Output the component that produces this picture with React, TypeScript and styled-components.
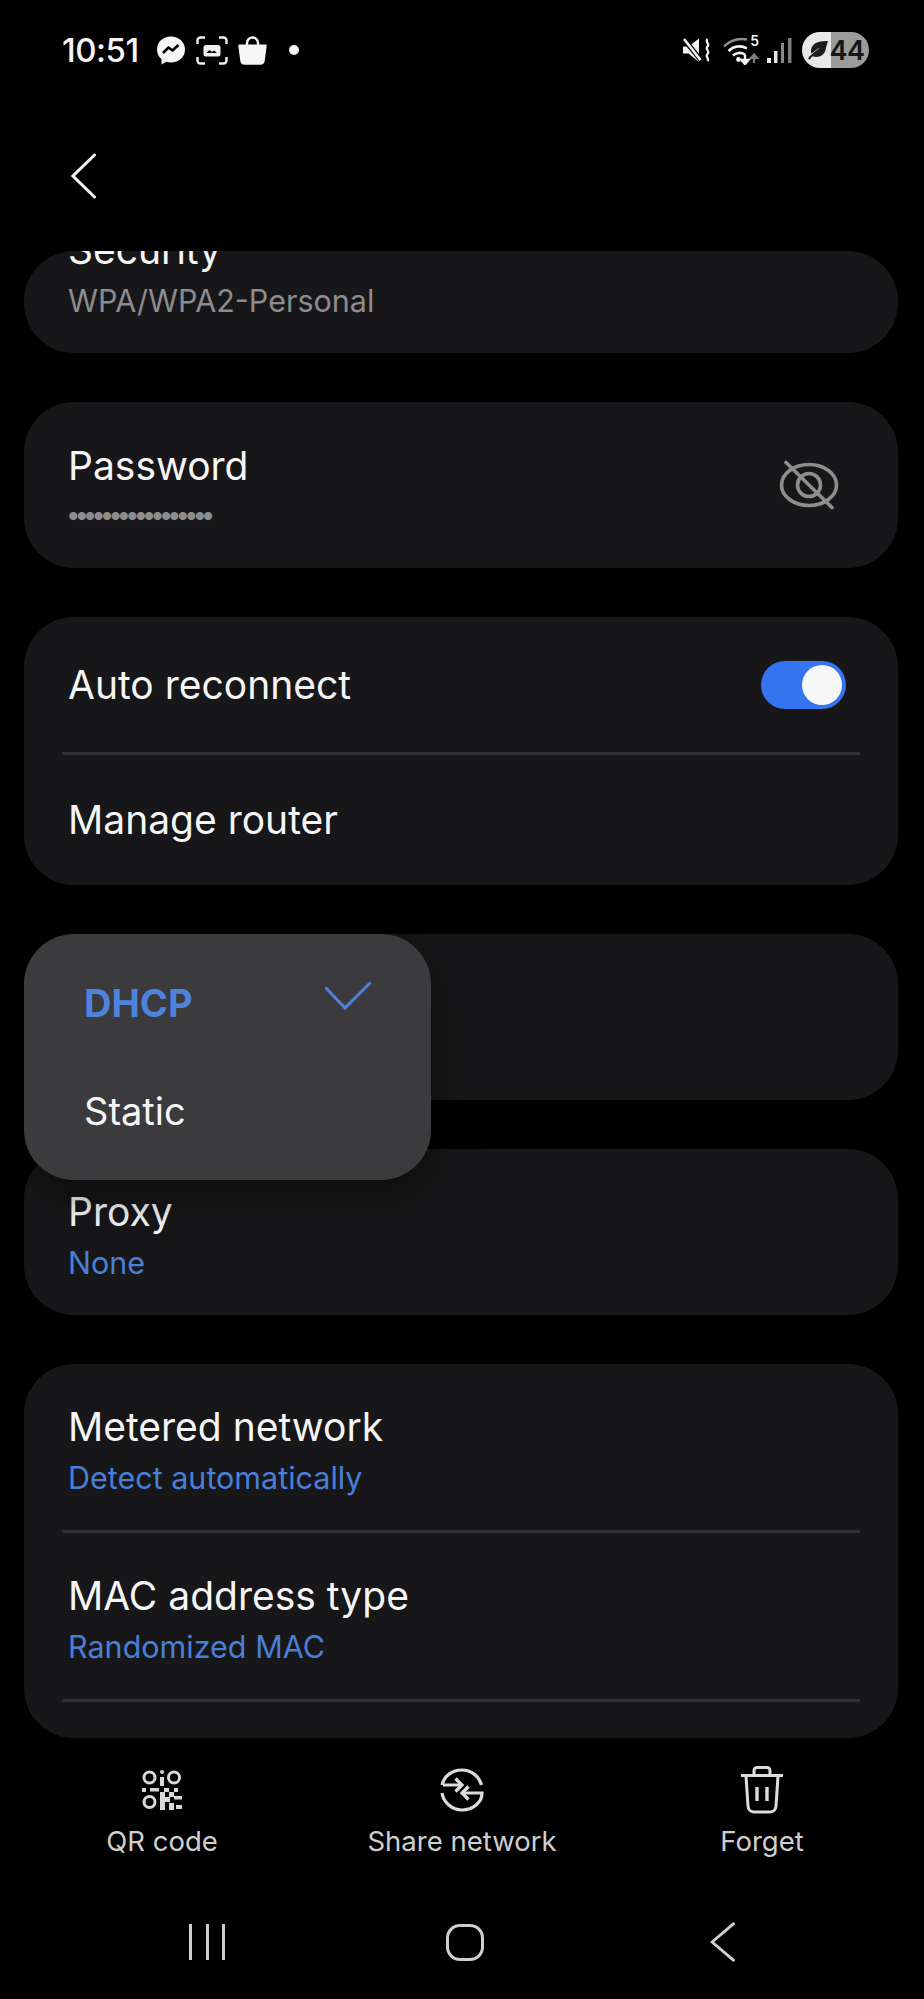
import React from "react"
import styled, { createGlobalStyle } from "styled-components"

const GlobalStyle = createGlobalStyle`
  html, body {
    margin: 0;
    padding: 0;
    background: #000;
  }

  body {
    font-family: Inter, "Noto Sans", sans-serif;
  }
`

// Status bar icons
const MessengerIcon = () => (
  <svg width="30" height="29" viewBox="0 0 30 29">
    <path
      d="M15 0.500C7 0.500 1 6 1 13.500c0 4 1.700 7.300 4.500 9.600V28.500l5-2.700c1.400 0.400 2.900 0.600 4.500 0.600 8 0 14-5.500 14-12.900S23 0.500 15 0.500z"
      fill="#f6f6f6"
    />
    <path d="M7 17l5.500-5.500 4 3 6-5.500" fill="none" stroke="#000" strokeWidth="2.600" strokeLinejoin="round" />
  </svg>
)

const CaptureIcon = () => (
  <svg width="32" height="29" viewBox="0 0 32 29" fill="none">
    <path
      d="M1.500 8V4.500a3 3 0 0 1 3-3H9M23 1.500h4.500a3 3 0 0 1 3 3V8M30.500 21v3.500a3 3 0 0 1-3 3H23M9 27.500H4.500a3 3 0 0 1-3-3V21"
      stroke="#f0f0f0"
      strokeWidth="2.400"
    />
    <rect x="7.500" y="9" width="17" height="11.500" rx="2.500" fill="#f0f0f0" />
    <path d="M10.500 17l3-3 2.500 2 2-1.500 3 2.500z" fill="#000" />
  </svg>
)

const BagIcon = () => (
  <svg width="29" height="29" viewBox="0 0 29 29">
    <path d="M9 10V7a5.500 5.500 0 0 1 11 0v3" fill="none" stroke="#f6f6f6" strokeWidth="2.400" />
    <path d="M1.500 8.500h26c0.800 0 1.300 0.600 1.200 1.400l-2 15.100c-0.300 2.300-2 3.700-4.200 3.700H6.500c-2.200 0-3.900-1.400-4.200-3.700L0.300 9.900c-0.100-0.800 0.400-1.400 1.200-1.400z" fill="#f6f6f6" />
  </svg>
)

const MuteIcon = () => (
  <svg width="28" height="25" viewBox="0 0 28 25" fill="none">
    <path d="M0 8.500h5.500L16 0.500V24L5.500 15.500H0z" fill="#f4f4f4" />
    <path d="M0.500 0.500L18.500 23" stroke="#000" strokeWidth="5" />
    <path d="M1 1l16.500 21" stroke="#f4f4f4" strokeWidth="2.600" />
    <path d="M24.500 1c-3 3 3 4.500 0 7.500s3 4.500 0 7.500 2.500 4 0 7" stroke="#f4f4f4" strokeWidth="2.200" />
  </svg>
)

const WifiIcon = () => (
  <svg width="40" height="30" viewBox="0 0 40 30" fill="none">
    <path d="M1 11.500C7 5.500 15 3 24 4.500" stroke="#8f8f8f" strokeWidth="2.400" />
    <path d="M5.500 16C10.500 11 18 10 24 13.500" stroke="#f4f4f4" strokeWidth="2.600" />
    <path d="M10 20.500c3-3 8-3.500 12-1" stroke="#f4f4f4" strokeWidth="2.600" />
    <circle cx="15.500" cy="24.500" r="2.400" fill="#f4f4f4" />
    <path d="M22 19.500v8M18.500 25l3.500 4 3.500-4z" stroke="#f4f4f4" strokeWidth="2.400" fill="#f4f4f4" />
    <path d="M31 28V20M28 23l3-3.500 3 3.500z" stroke="#7c7c7c" strokeWidth="2.200" fill="#7c7c7c" />
  </svg>
)

const SignalIcon = () => (
  <svg width="26" height="26" viewBox="0 0 26 26">
    <rect x="0" y="21" width="4" height="5" fill="#f4f4f4" />
    <rect x="7" y="14" width="3.500" height="12" fill="#e6e6e6" />
    <rect x="14" y="6" width="3" height="20" fill="#8a8a8a" />
    <rect x="21" y="1" width="3.500" height="25" fill="#7c7c7c" />
  </svg>
)

const LeafIcon = () => (
  <svg width="22" height="20" viewBox="0 0 22 20">
    <path d="M21 1C12 0.500 5 3 4 10c-0.200 1.500 0 2.500 0.500 3.500C7 12 10 9 13 7.500 10 10 6.500 13 4 15c-1 0.800-2.200 2-3 4l2 0.500c0.800-1.500 1.600-2.500 2.500-3.200 5.500 1.700 11.500-0.300 13-6.300C19 7 20 4 21 1z" fill="#1c1c1c" />
  </svg>
)

// Row and toolbar icons
const EyeOffIcon = () => (
  <svg width="60" height="52" viewBox="0 0 60 52" fill="none" stroke="#8e8e8e" strokeWidth="3.600">
    <ellipse cx="30" cy="26" rx="27.500" ry="20.500" />
    <circle cx="30" cy="26" r="11.500" />
    <path d="M7 3.500L53 48.500" strokeLinecap="round" />
  </svg>
)

const CheckIcon = () => (
  <svg width="48" height="29" viewBox="0 0 48 29" fill="none">
    <path d="M1.500 6.500L21 27 46.500 1.500" stroke="#4f82dc" strokeWidth="3" />
  </svg>
)

const QrIcon = () => (
  <svg width="40" height="40" viewBox="0 0 40 40" fill="#d8d8d8">
    <g fill="none" stroke="#d8d8d8" strokeWidth="3">
      <circle cx="7.500" cy="7.500" r="5.500" />
      <circle cx="32" cy="7.500" r="5.500" />
      <circle cx="7.500" cy="32" r="5.500" />
    </g>
    <rect x="18" y="0" width="4" height="4" rx="2" />
    <rect x="18" y="7" width="4" height="9" />
    <rect x="0" y="18" width="4" height="4" />
    <rect x="8" y="18" width="9" height="3.500" />
    <rect x="22" y="18" width="5" height="4" />
    <rect x="32" y="18" width="4" height="4" />
    <rect x="18" y="22" width="5" height="18" />
    <rect x="27" y="22" width="5" height="5" />
    <rect x="23" y="27" width="5" height="5" />
    <rect x="32" y="26" width="8" height="3.500" />
    <rect x="27" y="33" width="5" height="7" />
    <rect x="34" y="35" width="6" height="4" />
  </svg>
)

const ShareIcon = () => (
  <svg width="44" height="44" viewBox="0 0 44 44" fill="none" stroke="#dcdcdc" strokeWidth="3.200">
    <path d="M2 17C4 8 12 2 22 2c9 0 17 6 19.500 15" />
    <path d="M2 25c1.500 9.500 10 17 20 17 11 0 20-7.500 20-17H22" />
    <path d="M3 17h19M15.500 10.500l6.500 6.500-6.500 6.500" />
    <path d="M28.500 18.500L22 25l6.500 6.500" />
  </svg>
)

const TrashIcon = () => (
  <svg width="44" height="48" viewBox="0 0 44 48" fill="none" stroke="#dcdcdc" strokeWidth="3">
    <path d="M1 9.500h42" />
    <path d="M14 9V4.500a3 3 0 0 1 3-3h10a3 3 0 0 1 3 3V9" />
    <path d="M6 10l2 30c0.200 3.500 2.500 6 6 6h16c3.500 0 5.800-2.500 6-6l2-30" />
    <path d="M17 21v14M27 21v14" strokeWidth="3.400" />
  </svg>
)

const ChevronLeft = ({ size }: { size: "large" | "small" }) => (
  <svg width="26" height={size === "large" ? 46 : 40} viewBox="0 0 26 46" preserveAspectRatio="none" fill="none">
    <path d="M23.500 2L2 23l21.500 21" stroke={size === "large" ? "#f2f2f2" : "#cfcfcf"} strokeWidth="3" strokeLinecap="round" />
  </svg>
)

const App: React.FC = () => (
  <Page>
    <GlobalStyle />

    <StatusBar>
      <StatusGroup>
        <Clock>10:51</Clock>
        <NotificationIcons>
          <MessengerIcon />
          <CaptureIcon />
          <BagIcon />
        </NotificationIcons>
        <MoreDot />
      </StatusGroup>

      <SystemIcons>
        <MuteIcon />
        <WifiSlot>
          <WifiIcon />
          <WifiBand>5</WifiBand>
        </WifiSlot>
        <SignalIcon />
        <Battery>
          <LeafIcon />
          44
        </Battery>
      </SystemIcons>
    </StatusBar>

    <Header>
      <ChevronLeft size="large" />
    </Header>

    <ScrollArea>
      <ScrollContent>
        <Card>
          <TwoLineRow>
            <Title>Security</Title>
            <GreySub>WPA/WPA2-Personal</GreySub>
          </TwoLineRow>
        </Card>

        <Card>
          <TwoLineRow>
            <SplitRow>
              <div>
                <Title>Password</Title>
                <Dots>•••••••••••••••••</Dots>
              </div>
              <EyeSlot>
                <EyeOffIcon />
              </EyeSlot>
            </SplitRow>
          </TwoLineRow>
        </Card>

        <Card>
          <SingleRow>
            <Title>Auto reconnect</Title>
            <Toggle>
              <ToggleThumb />
            </Toggle>
          </SingleRow>
          <Divider />
          <SingleRow $short>
            <Title>Manage router</Title>
          </SingleRow>
        </Card>

        <Card>
          <TwoLineRow>
            <Title>IP settings</Title>
            <BlueSub>DHCP</BlueSub>
          </TwoLineRow>
          <Menu>
            <MenuItem $active>
              DHCP
              <MenuCheck>
                <CheckIcon />
              </MenuCheck>
            </MenuItem>
            <MenuItem>Static</MenuItem>
          </Menu>
        </Card>

        <Card>
          <TwoLineRow>
            <Title>Proxy</Title>
            <BlueSub>None</BlueSub>
          </TwoLineRow>
        </Card>

        <Card>
          <TwoLineRow>
            <Title>Metered network</Title>
            <BlueSub>Detect automatically</BlueSub>
          </TwoLineRow>
          <Divider />
          <TwoLineRow>
            <Title>MAC address type</Title>
            <BlueSub>Randomized MAC</BlueSub>
          </TwoLineRow>
          <Divider />
          <TwoLineRow />
        </Card>
      </ScrollContent>
    </ScrollArea>

    <Actions>
      <Action>
        <ActionIcon>
          <QrIcon />
        </ActionIcon>
        <ActionLabel>QR code</ActionLabel>
      </Action>
      <Action>
        <ActionIcon>
          <ShareIcon />
        </ActionIcon>
        <ActionLabel>Share network</ActionLabel>
      </Action>
      <Action>
        <ActionIcon>
          <TrashIcon />
        </ActionIcon>
        <ActionLabel>Forget</ActionLabel>
      </Action>
    </Actions>

    <NavBar>
      <NavSlot>
        <RecentsIcon>
          <RecentsBar />
          <RecentsBar />
          <RecentsBar />
        </RecentsIcon>
      </NavSlot>
      <NavSlot>
        <HomeIcon />
      </NavSlot>
      <NavSlot>
        <ChevronLeft size="small" />
      </NavSlot>
    </NavBar>
  </Page>
)

const Page = styled.div`
  display: flex;
  flex-direction: column;
  width: 924px;
  height: 1999px;
  overflow: hidden;
  background: #000;
  color: #f5f5f5;
`

const StatusBar = styled.div`
  display: flex;
  justify-content: space-between;
  align-items: center;
  flex: 0 0 100px;
  padding: 0 55px 0 62px;
  box-sizing: border-box;
`

const StatusGroup = styled.div`
  display: flex;
  align-items: center;
  gap: 12px;
`

const SystemIcons = styled.div`
  display: flex;
  align-items: center;
  gap: 9px;
`

const Clock = styled.span`
  font-size: 33px;
  font-weight: 500;
  letter-spacing: -0.5px;
  margin-right: 5px;
`

const NotificationIcons = styled.div`
  display: flex;
  align-items: center;
  gap: 10px;
`

const MoreDot = styled.span`
  width: 10px;
  height: 10px;
  margin-left: 10px;
  border-radius: 50%;
  background: #f5f5f5;
`

const WifiSlot = styled.div`
  position: relative;
  display: flex;
  margin: 0 -5px 0 3px;
`

const WifiBand = styled.span`
  position: absolute;
  top: -3px;
  right: 4px;
  font-size: 14px;
  font-weight: 600;
  color: #f4f4f4;
`

const Battery = styled.div`
  display: flex;
  align-items: center;
  justify-content: center;
  gap: 1px;
  width: 67px;
  height: 36px;
  border-radius: 18px;
  background: linear-gradient(90deg, #e8e8e8 0 43%, #9b9b9b 43% 100%);
  color: #161616;
  font-size: 27px;
  font-weight: 600;
  letter-spacing: -0.5px;
`

const Header = styled.div`
  display: flex;
  align-items: center;
  flex: 0 0 151px;
  padding-left: 71px;
  box-sizing: border-box;
`

const ScrollArea = styled.div`
  flex: 0 0 1487px;
  margin: 0 26px 0 24px;
  overflow: hidden;
  border-radius: 50px;
`

const ScrollContent = styled.div`
  display: flex;
  flex-direction: column;
  gap: 49px;
  margin-top: -64px;
`

const Card = styled.div`
  position: relative;
  border-radius: 50px;
  background: #171719;
`

const TwoLineRow = styled.div`
  display: flex;
  flex-direction: column;
  justify-content: center;
  height: 166px;
  padding: 6px 44px 0;
  box-sizing: border-box;
`

const SplitRow = styled.div`
  display: flex;
  justify-content: space-between;
  align-items: center;
  padding-right: 15px;
`

const EyeSlot = styled.span`
  display: flex;
  margin-bottom: 6px;
`

const SingleRow = styled.div<{ $short?: boolean }>`
  display: flex;
  justify-content: space-between;
  align-items: center;
  height: ${({ $short }) => ($short ? 130 : 135)}px;
  padding: 0 52px 0 44px;
  box-sizing: border-box;
`

const Title = styled.div`
  font-size: 39px;
  line-height: 46px;
  color: #f5f5f5;
`

const GreySub = styled.div`
  margin-top: 9px;
  font-size: 30.500px;
  line-height: 38px;
  color: #8c8c8c;
`

const BlueSub = styled(GreySub)`
  color: #4a7fd8;
`

const Dots = styled(GreySub)`
  margin: 7px 0 0 -2px;
  font-size: 26px;
  letter-spacing: -6.200px;
`

const Toggle = styled.div`
  display: flex;
  align-items: center;
  justify-content: flex-end;
  width: 85px;
  height: 48px;
  padding: 0 4px;
  box-sizing: border-box;
  border-radius: 24px;
  background: #3474ee;
`

const ToggleThumb = styled.div`
  width: 40px;
  height: 40px;
  border-radius: 50%;
  background: #f7f7f7;
`

const Divider = styled.div`
  height: 3px;
  margin: 0 38px;
  background: #2f2f31;
`

const Menu = styled.div`
  position: absolute;
  z-index: 2;
  top: 0;
  left: 0;
  display: flex;
  flex-direction: column;
  justify-content: center;
  width: 407px;
  height: 246px;
  padding: 0 59px 0 60px;
  box-sizing: border-box;
  border-radius: 50px;
  background: #3b3b3d;
  box-shadow: 0 12px 44px rgba(0, 0, 0, 0.55);
`

const MenuItem = styled.div<{ $active?: boolean }>`
  display: flex;
  justify-content: space-between;
  align-items: flex-start;
  height: 108px;
  line-height: 108px;
  font-size: 38px;
  font-weight: ${({ $active }) => ($active ? 700 : 400)};
  color: ${({ $active }) => ($active ? "#4f82dc" : "#f5f5f5")};
`

const MenuCheck = styled.span`
  display: flex;
  margin-top: 32px;
  line-height: 0;
`

const Actions = styled.div`
  display: grid;
  grid-template-columns: repeat(3, 300px);
  flex: 0 0 auto;
  padding: 28px 12px 0;
`

const Action = styled.div`
  display: flex;
  flex-direction: column;
  align-items: center;
`

const ActionIcon = styled.div`
  display: flex;
  align-items: center;
  justify-content: center;
  height: 48px;
`

const ActionLabel = styled.div`
  margin-top: 9px;
  font-size: 27.500px;
  line-height: 36px;
  color: #cfcfcf;
`

const NavBar = styled.div`
  display: grid;
  grid-template-columns: repeat(3, 258px);
  margin-top: 64px;
  padding-left: 78px;
`

const NavSlot = styled.div`
  display: flex;
  align-items: center;
  justify-content: center;
  height: 38px;
`

const RecentsIcon = styled.div`
  display: flex;
  gap: 13.500px;
`

const RecentsBar = styled.span`
  width: 3px;
  height: 36px;
  background: #cfcfcf;
`

const HomeIcon = styled.div`
  width: 38px;
  height: 37px;
  box-sizing: border-box;
  border: 3px solid #cfcfcf;
  border-radius: 14px;
`

export default App
